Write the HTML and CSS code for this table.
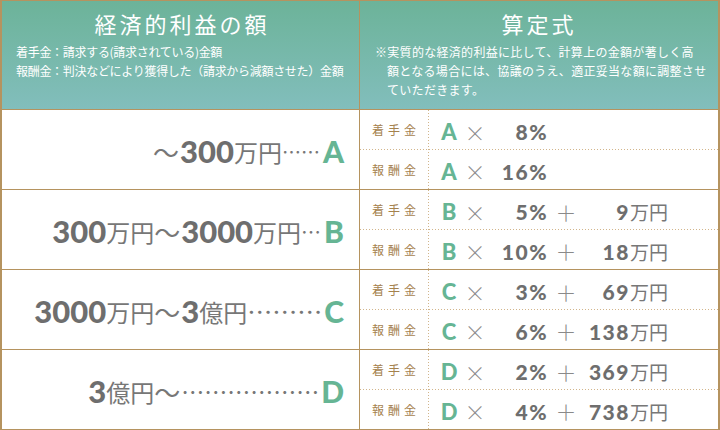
FILE: index.html
```html
<!DOCTYPE html>
<html lang="ja">
<head>
<meta charset="utf-8">
<link rel="stylesheet" href="styles.css">
</head>
<body>
<div class="tbl">
  <div class="hcell hl">
    <div class="htitle">経済的利益の額</div>
    <div class="hsub">着手金：請求する(請求されている)金額<br>報酬金：判決などにより獲得した（請求から減額させた）金額</div>
  </div>
  <div class="hcell hr">
    <div class="htitle">算定式</div>
    <div class="note">※実質的な経済的利益に比して、計算上の金額が著しく高<br>額となる場合には、協議のうえ、適正妥当な額に調整させ<br>ていただきます。</div>
  </div>

  <div class="range"><span class="wave">～</span><b>300</b><span class="yen">万円</span><span class="dots d1">……</span><span class="L">A</span></div>
  <div class="formula">
    <div class="sub"><span class="lab">着手金</span><div class="vals"><span class="L">A</span><span class="x">×</span><span class="pct">8%</span></div></div>
    <div class="sub"><span class="lab">報酬金</span><div class="vals"><span class="L">A</span><span class="x">×</span><span class="pct">16%</span></div></div>
  </div>

  <div class="range"><b>300</b><span class="yen">万円</span><span class="wave">～</span><b>3000</b><span class="yen">万円</span><span class="dots d2">…</span><span class="L">B</span></div>
  <div class="formula">
    <div class="sub"><span class="lab">着手金</span><div class="vals"><span class="L">B</span><span class="x">×</span><span class="pct">5%</span><span class="x">＋</span><span class="amt">9<span class="yen">万円</span></span></div></div>
    <div class="sub"><span class="lab">報酬金</span><div class="vals"><span class="L">B</span><span class="x">×</span><span class="pct">10%</span><span class="x">＋</span><span class="amt">18<span class="yen">万円</span></span></div></div>
  </div>

  <div class="range"><b>3000</b><span class="yen">万円</span><span class="wave">～</span><b>3</b><span class="yen">億円</span><span class="dots d3">………</span><span class="L">C</span></div>
  <div class="formula">
    <div class="sub"><span class="lab">着手金</span><div class="vals"><span class="L">C</span><span class="x">×</span><span class="pct">3%</span><span class="x">＋</span><span class="amt">69<span class="yen">万円</span></span></div></div>
    <div class="sub"><span class="lab">報酬金</span><div class="vals"><span class="L">C</span><span class="x">×</span><span class="pct">6%</span><span class="x">＋</span><span class="amt">138<span class="yen">万円</span></span></div></div>
  </div>

  <div class="range"><b>3</b><span class="yen">億円</span><span class="wave">～</span><span class="dots">………………</span><span class="L">D</span></div>
  <div class="formula">
    <div class="sub"><span class="lab">着手金</span><div class="vals"><span class="L">D</span><span class="x">×</span><span class="pct">2%</span><span class="x">＋</span><span class="amt">369<span class="yen">万円</span></span></div></div>
    <div class="sub"><span class="lab">報酬金</span><div class="vals"><span class="L">D</span><span class="x">×</span><span class="pct">4%</span><span class="x">＋</span><span class="amt">738<span class="yen">万円</span></span></div></div>
  </div>
</div>
</body>
</html>
```

FILE: styles.css
```css
html, body {
  margin: 0;
  padding: 0;
  background: #ffffff;
}
.tbl {
  width: 720px;
  height: 430px;
  box-sizing: border-box;
  border: 1px solid #b5935f;
  border-left-width: 2px;
  border-right-width: 2px;
  display: grid;
  grid-template-columns: 357px 358px;
  grid-template-rows: 108px repeat(4, 80px);
  column-gap: 1px;
  background: #b5935f;
  font-family: "Noto Sans CJK JP", sans-serif;
  color: #707070;
}
.hcell {
  background: linear-gradient(#6cb399, #82bebc);
  color: #ffffff;
  overflow: hidden;
}
.htitle {
  font-size: 22px;
  line-height: 28px;
  letter-spacing: 3px;
  text-align: center;
  padding-top: 8px;
  font-weight: 400;
}
.hl .htitle { padding-left: 3px; }
.hsub {
  margin-top: 5px;
  padding-left: 14px;
  font-size: 12px;
  line-height: 19px;
  letter-spacing: -0.3px;
  white-space: nowrap;
}
.note {
  margin-top: 5px;
  padding-left: 27px;
  text-indent: -12px;
  font-size: 12px;
  line-height: 19px;
  letter-spacing: 0.3px;
  white-space: nowrap;
}
.range {
  background: #ffffff;
  border-top: 1px solid #b5935f;
  display: flex;
  align-items: center;
  justify-content: flex-end;
  padding-right: 15px;
  padding-top: 3px;
  white-space: nowrap;
}
.range b {
  font-family: "Lato", sans-serif;
  font-weight: 900;
  font-size: 31px;
  letter-spacing: 0;
  color: #6e6e6e;
}
.range .yen {
  font-size: 24px;
  letter-spacing: 0;
  color: #777777;
}
.range .wave {
  font-size: 26px;
  color: #777777;
  letter-spacing: 0;
  margin-right: 1px;
}
.range .dots {
  font-size: 23px;
  color: #777777;
  letter-spacing: 0;
  margin-right: 2px;
}
.range .dots.d1 { font-size: 19px; margin-right: 3px; }
.range .dots.d2 { font-size: 20px; margin-right: 3px; }
.range .dots.d3 { font-size: 25px; }
.range .L {
  font-family: "Lato", sans-serif;
  font-weight: 900;
  font-size: 30px;
  color: #66b594;
}
.formula {
  background: #ffffff;
  border-top: 1px solid #b5935f;
  display: flex;
  flex-direction: column;
}
.sub {
  height: 39px;
  display: flex;
  align-items: stretch;
}
.sub + .sub {
  height: 40px;
  background: linear-gradient(to right, #d2b58b 1px, transparent 1px) left top / 3px 1px repeat-x;
}
.lab {
  width: 68px;
  display: flex;
  align-items: center;
  justify-content: center;
  font-size: 12px;
  letter-spacing: 4px;
  padding-left: 4px;
  box-sizing: border-box;
  color: #a5824e;
}
.vals {
  flex: 1;
  display: flex;
  align-items: center;
  padding-left: 10px;
  padding-top: 4px;
  background: linear-gradient(#d2b58b 1px, transparent 1px) left top / 1px 3px repeat-y;
  white-space: nowrap;
}
.vals .L {
  font-family: "Lato", sans-serif;
  font-weight: 900;
  font-size: 22px;
  color: #66b594;
  width: 22px;
  text-align: center;
}
.vals .x {
  font-size: 21px;
  color: #8a8a8a;
  width: 30px;
  text-align: center;
  font-weight: 300;
}
.vals .pct {
  font-family: "Lato", sans-serif;
  font-weight: 900;
  font-size: 21px;
  letter-spacing: 1.5px;
  color: #6e6e6e;
  width: 58px;
  text-align: right;
}
.vals .pct + .x {
  width: 36px;
}
.vals .amt {
  font-family: "Lato", sans-serif;
  font-weight: 900;
  font-size: 21px;
  letter-spacing: 1.5px;
  color: #6e6e6e;
  width: 84px;
  text-align: right;
}
.vals .amt .yen {
  font-family: "Noto Sans CJK JP", sans-serif;
  font-weight: 400;
  font-size: 19px;
  letter-spacing: 0;
  color: #777777;
}
```
